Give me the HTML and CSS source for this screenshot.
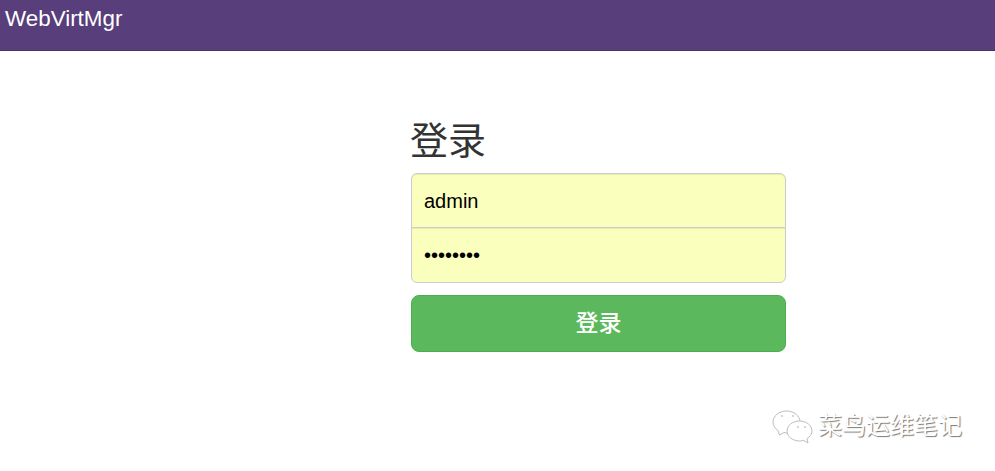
FILE: index.html
```html
<!DOCTYPE html>
<html lang="zh-CN">
<head>
    <meta charset="UTF-8">
    <meta name="viewport" content="width=device-width, initial-scale=1.0">
    <title>WebVirtMgr</title>
    <link rel="stylesheet" href="styles.css">
</head>
<body>
    <nav class="navbar">
        <a class="brand" href="#">WebVirtMgr</a>
    </nav>

    <div class="container">
        <form class="login-form">
            <h2 class="login-title">登录</h2>
            <input class="login-input login-input-top" type="text" value="admin">
            <input class="login-input login-input-bottom" type="password" value="password">
            <button class="login-btn" type="button">登录</button>
        </form>
    </div>

    <div class="watermark">
        <svg class="watermark-icon" width="42" height="36" viewBox="0 0 42 36">
            <path class="bubble" d="M14.500 3C7 3 1 8 1 14c0 3.500 2 6.500 5 8.500L7.500 27l4.500-2.500c1.500.4 3 .5 4 .5 6 0 12-5 12-11S22 3 14.500 3z"/>
            <path class="bubble" d="M27.500 13C20.600 13 15 17.500 15 23s5.600 10 12.500 10c1.500 0 3-.2 4.300-.6L36 35l-1-4.300c3-1.900 5-4.700 5-7.700 0-5.500-5.600-10-12.500-10z"/>
            <circle class="eye" cx="10" cy="8" r="1"/>
            <circle class="eye" cx="21" cy="8" r="1"/>
            <circle class="eye" cx="26" cy="19" r="1"/>
            <circle class="eye" cx="33" cy="19" r="1"/>
        </svg>
        <span class="watermark-text">菜鸟运维笔记</span>
    </div>
</body>
</html>
```

FILE: styles.css
```css
* {
    box-sizing: border-box;
}
body {
    margin: 0;
    font-family: "Liberation Sans", Arial, "Noto Sans CJK SC", sans-serif;
    background-color: #fff;
    color: #333;
}
.navbar {
    height: 51px;
    background-color: #583e7b;
    border-bottom: 1px solid #4b3269;
}
.brand {
    display: block;
    padding: 4px 0 0 5px;
    font-size: 22.400px;
    line-height: 30px;
    color: #fff;
    text-decoration: none;
}
.container {
    padding-left: 410px;
}
.login-form {
    width: 376px;
    display: flex;
    flex-direction: column;
}
.login-title {
    margin: 65px 0 7px;
    font-size: 38px;
    line-height: 50px;
    font-weight: 400;
}
.login-input {
    width: 375px;
    height: 55px;
    margin-left: 1px;
    padding: 2px 12px 0;
    border: 1px solid #ccc;
    background-color: #faffbd;
    font-family: inherit;
    font-size: 20px;
    color: #000;
    box-shadow: inset 0 1px 1px rgba(0, 0, 0, 0.075);
}
.login-input-top {
    border-radius: 6px 6px 0 0;
}
.login-input-bottom {
    height: 56px;
    margin-top: -1px;
    padding-top: 0;
    border-radius: 0 0 6px 6px;
}
.login-btn {
    width: 375px;
    height: 57px;
    margin: 12px 0 0 1px;
    padding: 0 0 5px;
    border: 1px solid #4cae4c;
    border-radius: 8px;
    background-color: #5cb85c;
    color: #fff;
    font-family: inherit;
    font-size: 23px;
    font-weight: 500;
}
.watermark {
    position: absolute;
    left: 772px;
    top: 408px;
    display: flex;
    align-items: center;
    gap: 4px;
}
.bubble {
    fill: #fff;
    stroke: #bdbdbd;
    stroke-width: 1;
}
.eye {
    fill: #c8c8c8;
}
.watermark-text {
    font-size: 24px;
    line-height: 36px;
    color: #fff;
    text-shadow: 1px 1px 1px #777;
}
```
